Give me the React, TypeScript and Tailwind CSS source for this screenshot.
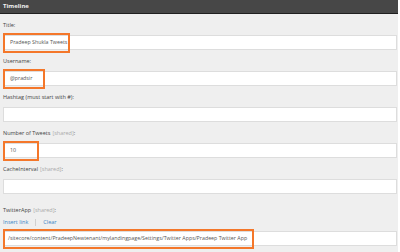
const font = { fontFamily: '"Open Sans", "Liberation Sans", sans-serif' };

function Field({
  label,
  shared,
  value,
  box,
  links,
}: {
  label: string;
  shared?: boolean;
  value?: string;
  box?: string;
  links?: boolean;
}) {
  return (
    <div className={`flex flex-col ${links ? "mt-[5px]" : ""}`}>
      <div className="h-[21px] flex items-end pb-[6px] text-[5.5px] leading-[7px] text-[#444]">
        {label}
        {shared && <span className="text-[#aaa] ml-[2px]">[shared]</span>}
        <span>:</span>
      </div>
      {links && (
        <div className="-mt-[4px] mb-[3px] flex items-center h-[12px] text-[5.5px] text-[#3b86c6]">
          <span>Insert link</span>
          <span className="mx-[7px] h-[7px] w-px bg-[#d0d0d0]" />
          <span>Clear</span>
        </div>
      )}
      <div className={`relative h-[15px] bg-white border border-[#dddddd] flex items-center text-[5.3px] text-[#555] ${links ? "pl-[4px]" : "pl-[6px]"}`}>
        {value}
        {box && (
          <div className={`absolute -left-px -top-[3px] h-[20px] border-2 border-[#f4772a] ${box}`} />
        )}
      </div>
    </div>
  );
}

export default function App() {
  return (
    <main className="w-[400px] h-[252px] bg-white overflow-hidden" style={font}>
      <div className="w-[398px] h-full bg-[#efefef]">
        <div className="h-[14px] bg-[#474747] border-b border-[#1f1f1f] flex items-center px-[3px] text-[6px] font-bold text-[#f0f0f0]">
          Timeline
        </div>
        <div className="flex flex-col pl-[3px] pr-[1px]">
          <Field label="Title" value="Pradeep Shukla Tweets" box="w-[67px]" />
          <Field label="Username" value="@pradsir" box="w-[42px]" />
          <Field label="Hashtag (must start with #)" />
          <Field label="Number of Tweets" shared value="10" box="w-[36px]" />
          <Field label="CacheInterval" shared />
          <Field
            label="TwitterApp"
            shared
            links
            value="/sitecore/content/PradeepNewtenant/mylandingpage/Settings/Twitter Apps/Pradeep Twitter App"
            box="w-[251px]"
          />
        </div>
      </div>
    </main>
  );
}
